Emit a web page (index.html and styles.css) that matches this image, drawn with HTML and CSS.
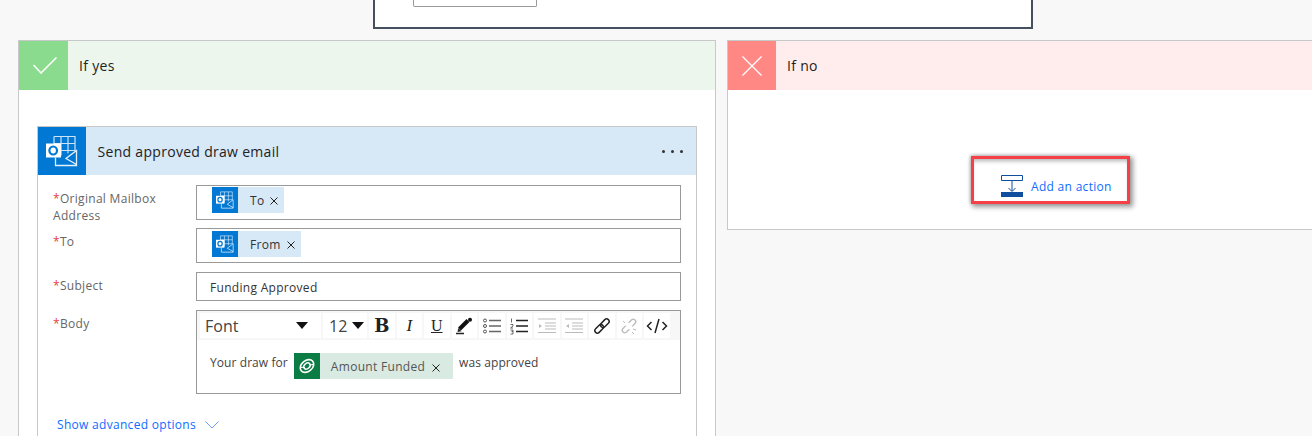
FILE: index.html
```html
<!DOCTYPE html>
<html lang="en">
<head>
<meta charset="utf-8">
<title>If yes / If no</title>
<link rel="stylesheet" href="styles.css">
</head>
<body>
<svg class="defs" width="0" height="0" aria-hidden="true">
  <symbol id="outlook" viewBox="0 0 32 32">
    <path d="M8 1.500h21v22M8 1.500v8M15 1.500v22M22 1.500v22M8 8.500h21M8 15.500h21" fill="none" stroke="#fff" stroke-opacity=".8" stroke-width="1.200"/>
    <path d="M9.500 22.500 30.500 15.500v15h-21z" fill="#0078d4"/>
    <path d="M9.500 22.500v8h21v-15L20 23.500l10.500 6" fill="none" stroke="#fff" stroke-opacity=".9" stroke-width="1.300"/>
    <path d="M-.5 8.500h15.500v14H-.5z" fill="#fff"/>
    <ellipse cx="7.200" cy="15.500" rx="3.800" ry="4" fill="none" stroke="#0078d4" stroke-width="2.200"/>
  </symbol>
</svg>

<div class="top-box"><div class="top-control"></div></div>

<main class="branches">
  <section class="branch branch-yes">
    <header class="branch-head">
      <span class="branch-icon">
        <svg width="27" height="17" viewBox="0 0 27 17"><path d="M3.500 8 11 16 26.500.500" fill="none" stroke="#fff" stroke-width="1.500"/></svg>
      </span>
      <h2 class="branch-title">If yes</h2>
    </header>
    <div class="branch-body">
      <article class="card">
        <header class="card-head">
          <span class="card-icon"><svg width="32" height="32"><use href="#outlook"/></svg></span>
          <h3 class="card-title">Send approved draw email</h3>
          <span class="dots"><i></i><i></i><i></i></span>
        </header>
        <div class="card-body">
          <div class="field field-first">
            <label class="label"><span class="req">*</span>Original Mailbox Address</label>
            <div class="input input-token">
              <span class="token"><span class="token-icon"><svg width="18" height="18"><use href="#outlook"/></svg></span><span class="token-text">To</span><svg class="token-x" width="8" height="8" viewBox="0 0 8 8"><path d="M.500.500l7 7M7.500.500l-7 7"/></svg></span>
            </div>
          </div>
          <div class="field field-second">
            <label class="label"><span class="req">*</span>To</label>
            <div class="input input-token">
              <span class="token"><span class="token-icon"><svg width="18" height="18"><use href="#outlook"/></svg></span><span class="token-text">From</span><svg class="token-x" width="8" height="8" viewBox="0 0 8 8"><path d="M.500.500l7 7M7.500.500l-7 7"/></svg></span>
            </div>
          </div>
          <div class="field field-third">
            <label class="label"><span class="req">*</span>Subject</label>
            <div class="input input-text">Funding Approved</div>
          </div>
          <div class="field field-fourth">
            <label class="label"><span class="req">*</span>Body</label>
            <div class="input editor">
              <div class="toolbar">
                <span class="tool tool-font">Font<i class="caret"></i></span>
                <span class="tool tool-size">12<i class="caret"></i></span>
                <span class="tool tool-b">B</span>
                <span class="tool tool-i">I</span>
                <span class="tool tool-u">U</span>
                <span class="tool"><svg width="18" height="18" viewBox="0 0 18 18"><path d="M1 16.500h8" stroke="#222" stroke-width="1.500"/><path d="M4.500 12 13 3.500" stroke="#111" stroke-width="4"/><path d="M2.500 15l.8-4 3.200 3.200z" fill="#222"/><circle cx="15" cy="2.800" r="2" fill="#111"/></svg></span>
                <span class="tool"><svg width="20" height="18" viewBox="0 0 20 18"><g fill="none" stroke="#555"><circle cx="3" cy="3.500" r="1.500"/><circle cx="3" cy="9" r="1.500"/><circle cx="3" cy="14.500" r="1.500"/></g><path d="M7 3.500h12M7 9h12M7 14.500h12" stroke="#666" stroke-width="1.500"/></svg></span>
                <span class="tool"><svg width="20" height="18" viewBox="0 0 20 18"><path d="M2.500 1.500v4M1.500 7.500h2.500v1.500l-2.500 2h2.500M1.500 13h2.500v1.500h-1.500M4 14.500V17H1.500" fill="none" stroke="#444" stroke-width=".8"/><path d="M7 3.500h12M7 9h12M7 14.500h12" stroke="#222" stroke-width="1.500"/></svg></span>
                <span class="tool tool-off"><svg width="20" height="18" viewBox="0 0 20 18"><path d="M1 2h18M8 6h11M8 9h11M8 12h11M1 15.500h18" stroke="#bbb"/><path d="M2 7l3 2-3 2z" fill="#bbb"/></svg></span>
                <span class="tool tool-off"><svg width="20" height="18" viewBox="0 0 20 18"><path d="M1 2h18M8 6h11M8 9h11M8 12h11M1 15.500h18" stroke="#bbb"/><path d="M5 7 2 9l3 2z" fill="#bbb"/></svg></span>
                <span class="tool"><svg width="18" height="18" viewBox="0 0 18 18"><g fill="none" stroke="#222" stroke-width="1.500" transform="rotate(-45 9 9)"><rect x="0" y="6.500" width="10" height="5" rx="2.500"/><rect x="8" y="6.500" width="10" height="5" rx="2.500"/></g></svg></span>
                <span class="tool tool-off"><svg width="18" height="18" viewBox="0 0 18 18"><g fill="none" stroke="#bbb" stroke-width="1.300" transform="rotate(-45 9 9)"><path d="M7 6.500H3a2.500 2.500 0 0 0 0 5h4"/><path d="M11 6.500h4a2.500 2.500 0 0 1 0 5h-4"/></g><path d="M3 4 5 6M12 15l2 2M13 12l3 1" stroke="#bbb"/></svg></span>
                <span class="tool tool-code"><svg width="22" height="16" viewBox="0 0 22 16"><path d="M5.500 4 1.500 8l4 4M16.500 4l4 4-4 4M13 1 9 15" fill="none" stroke="#222" stroke-width="1.500"/></svg></span>
              </div>
              <div class="editor-text">
                <span class="plain">Your draw for</span>
                <span class="token token-green"><span class="token-icon token-icon-green"><svg width="18" height="18" viewBox="0 0 18 18"><g fill="none" stroke="#fff" transform="rotate(-40 9 9)"><ellipse cx="9" cy="9" rx="7.500" ry="5.500" stroke-width="1.600"/><ellipse cx="9" cy="9" rx="3.500" ry="2.600" stroke-width="1.500"/><path d="M3 6c2 1 3 2 3 3M15 12c-2-1-3-2-3-3" stroke-width="1.200"/></g></svg></span><span class="token-text token-text-green">Amount Funded</span><svg class="token-x token-x-green" width="8" height="8" viewBox="0 0 8 8"><path d="M.500.500l7 7M7.500.500l-7 7"/></svg></span>
                <span class="plain">was approved</span>
              </div>
            </div>
          </div>
          <a class="advanced">Show advanced options<svg width="14" height="8" viewBox="0 0 14 8"><path d="M.500.500 7 7 13.500.500" fill="none" stroke="#6d9ff5" stroke-width="1"/></svg></a>
        </div>
      </article>
    </div>
  </section>

  <section class="branch branch-no">
    <header class="branch-head">
      <span class="branch-icon">
        <svg width="20" height="20" viewBox="0 0 20 20"><path d="M.500.500l19 19M19.500.500l-19 19" stroke="#fff" stroke-width="1.300" fill="none"/></svg>
      </span>
      <h2 class="branch-title">If no</h2>
    </header>
    <div class="branch-body-no">
      <a class="add-action">
        <svg width="22" height="22" viewBox="0 0 22 22"><path d="M.500.500h21v5H.500z" fill="#fff" stroke="#0f4f9e"/><path d="M11 6v10M7.500 13 11 16.500 14.500 13" fill="none" stroke="#0f4f9e"/><path d="M0 17h22v5H0z" fill="#0f4f9e"/></svg>
        <span>Add an action</span>
      </a>
    </div>
  </section>
</main>
</body>
</html>
```
FILE: styles.css
```css
* { box-sizing: border-box; }
html, body { margin: 0; padding: 0; height: 436px; overflow: hidden; }
body {
  background: #f8f8f8;
  font-family: "Open Sans", "Noto Sans", "Liberation Sans", sans-serif;
  font-size: 12px;
  letter-spacing: .3px;
  color: #333;
}
.defs { position: absolute; }
.top-box {
  width: 660px;
  height: 29px;
  margin-left: 373px;
  padding-left: 38px;
  background: #fff;
  border: 2px solid #44505f;
  border-top: 0;
}
.top-control {
  width: 124px;
  height: 7px;
  background: #fff;
  border: 1px solid #999;
  border-top: 0;
  border-radius: 0 0 2px 2px;
}
.branches {
  display: flex;
  gap: 11px;
  margin-top: 11px;
  margin-left: 18px;
  align-items: flex-start;
  width: 1320px;
}
.branch {
  background: #fff;
  border: 1px solid #c8c8c8;
}
.branch-yes { width: 698px; height: 396px; flex: none; border-bottom: 0; }
.branch-no { flex: 1; height: 190px; }
.branch-head { display: flex; align-items: center; height: 49px; }
.branch-yes .branch-head { background: #ecf6ed; }
.branch-no .branch-head { background: #ffecec; }
.branch-icon {
  width: 49px;
  height: 49px;
  display: flex;
  align-items: center;
  justify-content: center;
}
.branch-yes .branch-icon { background: #8bdb8e; }
.branch-no .branch-icon { width: 48px; background: #ff8884; }
.branch-title {
  margin: 0 0 0 11px;
  font-size: 14px;
  font-weight: 400;
  color: #222;
}
.branch-body { padding: 36px 18px 0; }
.card {
  height: 310px;
  border: 1px solid #c8c8c8;
  border-bottom: 0;
  background: #fff;
}
.card-head { display: flex; align-items: center; height: 48px; background: #d7e8f7; }
.card-icon {
  width: 48px;
  height: 48px;
  background: #0078d4;
  display: flex;
  align-items: center;
  justify-content: center;
}
.card-title {
  flex: 1;
  margin: 0 0 0 11.500px;
  font-size: 14px;
  font-weight: 400;
  color: #222;
}
.dots { display: flex; gap: 6px; margin-right: 13px; }
.dots i { width: 3px; height: 3px; border-radius: 50%; background: #333; }
.card-body { padding: 10px 15px 0; }
.field { display: flex; }
.field-first { height: 35px; }
.field-second { margin-top: 8px; }
.field-third { margin-top: 9px; }
.field-fourth { margin-top: 9px; }
.label {
  width: 143px;
  flex: none;
  padding-top: 5px;
  font-size: 12px;
  line-height: 17px;
  color: #666;
}
.req { color: #e8423d; }
.input {
  width: 485px;
  background: #fff;
  border: 1px solid #999;
}
.input-token { height: 35px; padding: 1px 0 0 15px; }
.field-second .input-token { padding-top: 2px; }
.input-text {
  height: 29px;
  padding-left: 13px;
  line-height: 29px;
  font-size: 12px;
  color: #333;
}
.token { display: inline-flex; align-items: center; height: 26px; background: #d7e8f7; }
.token-icon {
  width: 26px;
  height: 26px;
  background: #0078d4;
  display: flex;
  align-items: center;
  justify-content: center;
}
.token-text { margin-left: 12px; font-size: 12px; color: #333; }
.token-x { margin: 2px 6px 0 6px; fill: none; stroke: #222; stroke-width: 1; }
.editor { height: 84px; }
.toolbar {
  display: flex;
  gap: 2px;
  height: 29px;
  padding: 2px 3px 0;
  background: #f7f7f7;
  letter-spacing: 0;
}
.tool {
  width: 25.500px;
  height: 25px;
  display: flex;
  align-items: center;
  justify-content: center;
  flex: none;
  background: #fff;
  color: #222;
}
.tool-font {
  width: 121px;
  justify-content: space-between;
  padding: 0 13px 0 5px;
  font-size: 16px;
  color: #444;
}
.tool-size {
  width: 44px;
  justify-content: space-between;
  padding: 0 3px 0 6px;
  font-size: 16px;
  color: #444;
}
.caret {
  width: 0;
  height: 0;
  border-left: 6px solid transparent;
  border-right: 6px solid transparent;
  border-top: 7px solid #111;
}
.tool-b { font: 700 18px "DejaVu Serif", serif; }
.tool-i { font: italic 400 17px "Liberation Serif", serif; }
.tool-u { font: 400 16px "Liberation Serif", serif; text-decoration: underline; }
.editor-text {
  display: flex;
  align-items: flex-start;
  gap: 6px;
  padding: 13px 13px 0;
  font-size: 12px;
  line-height: 17px;
  color: #444;
}
.plain { margin-top: 1px; letter-spacing: .08px; }
.token-green { background: #d9eae2; }
.token-icon-green { background: #0b7d44; }
.token-text-green { margin-left: 11px; color: #555; }
.token-x-green { margin: 3px 13px 0 7px; }
.advanced {
  display: flex;
  align-items: center;
  gap: 9px;
  margin-top: 22px;
  margin-left: 4px;
  font-size: 12px;
  color: #0f6cff;
}
.branch-body-no { display: flex; }
.add-action {
  display: flex;
  align-items: center;
  gap: 8px;
  height: 48px;
  width: 159px;
  margin-top: 66px;
  margin-left: 243px;
  padding: 12px 0 0 27px;
  background: #fff;
  border: 3px solid #f44046;
  box-shadow: 2px 2px 5px 1px rgba(0,0,0,.4), -1px -1px 3px rgba(0,0,0,.2), inset 0 4px 4px -2px rgba(0,0,0,.3);
  font-size: 12px;
  color: #0f6cff;
}
```
